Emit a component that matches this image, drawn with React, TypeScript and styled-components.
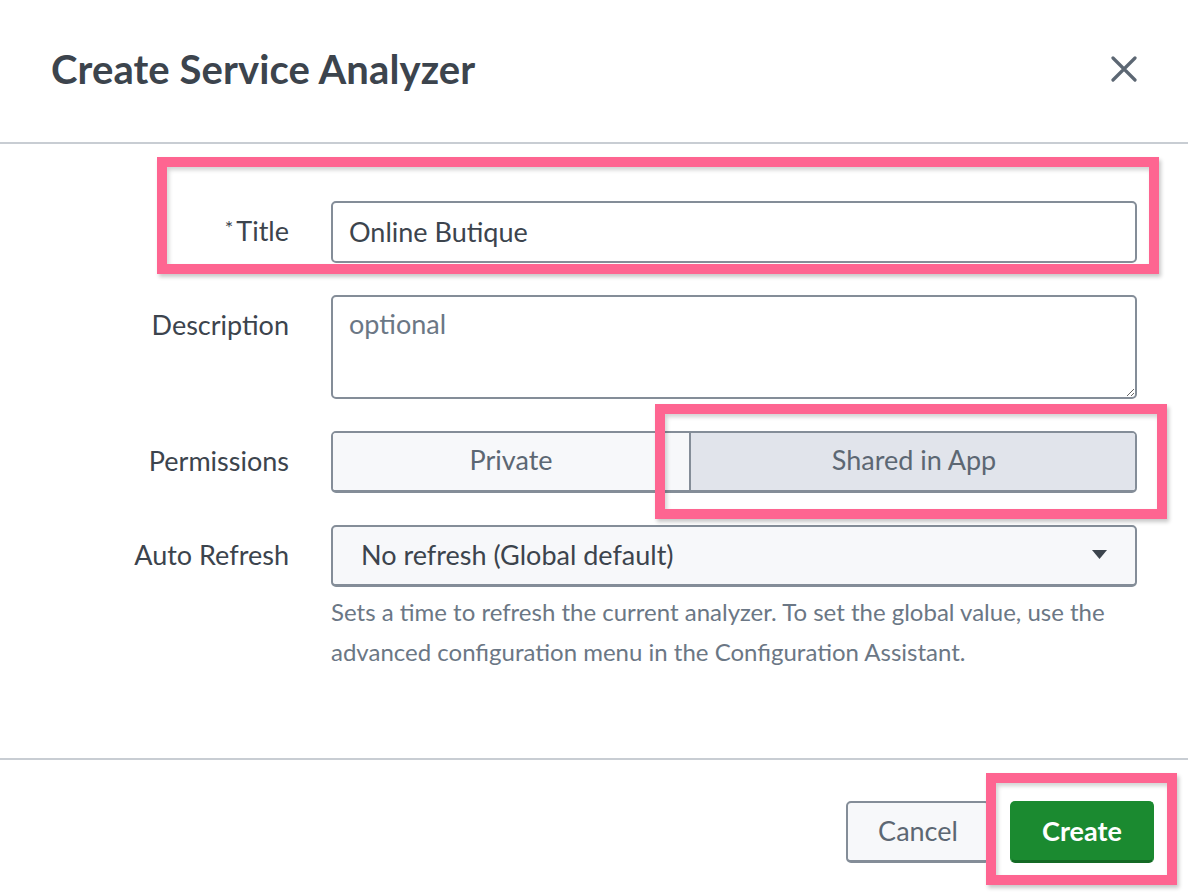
import React from "react";
import styled, { createGlobalStyle } from "styled-components";

const Global = createGlobalStyle`
  html, body { margin: 0; padding: 0; background: #fff; }
  body { font-family: Lato, "Open Sans", "Liberation Sans", sans-serif; color: #3c444d; }
  * { box-sizing: border-box; }
`;

const Dialog = styled.div`
  position: relative;
  width: 1188px;
  height: 896px;
  background: #fff;
  display: flex;
  flex-direction: column;
  overflow: hidden;
`;

const Header = styled.header`
  flex: none;
  height: 144px;
  display: flex;
  align-items: center;
  justify-content: space-between;
  padding: 0 50px 4px 51px;
  border-bottom: 2px solid #c8cdd3;
`;

const Heading = styled.h1`
  margin: 0;
  font-size: 40px;
  font-weight: 700;
  color: #3c444d;
  letter-spacing: 0.1px;
`;

const CloseButton = styled.button`
  width: 28px;
  height: 28px;
  padding: 0;
  border: 0;
  background: transparent;
  display: flex;
  align-items: center;
  justify-content: center;
`;

const Body = styled.main`
  flex: 1;
  padding: 57px 51px 0 0;
`;

const Form = styled.div`
  display: grid;
  grid-template-columns: 289px 806px;
  column-gap: 42px;
  row-gap: 32px;
  align-items: start;
`;

const Label = styled.label`
  height: 62px;
  text-align: right;
  font-size: 27px;
  line-height: 60px;
  color: #3c444d;
  white-space: nowrap;
`;

const Req = styled.span`
  display: inline-block;
  font-size: 20px;
  line-height: 0;
  position: relative;
  top: -6px;
  margin-right: 3px;
`;

const TextInput = styled.input`
  width: 100%;
  height: 62px;
  border: 2px solid #848d98;
  border-radius: 5px;
  padding: 0 16px 2px;
  font: inherit;
  font-size: 27px;
  color: #3c444d;
  background: #fff;
  outline: none;
`;

const TextArea = styled.textarea`
  display: block;
  width: 100%;
  height: 104px;
  border: 2px solid #848d98;
  border-radius: 5px;
  padding: 11px 16px;
  font: inherit;
  font-size: 27px;
  line-height: 32px;
  color: #3c444d;
  background: #fff;
  outline: none;
  resize: vertical;
  &::placeholder { color: #6b7785; }
`;

const Segmented = styled.div`
  display: flex;
  height: 62px;
  border: 2px solid #848d98;
  border-bottom-width: 3px;
  border-radius: 5px;
  overflow: hidden;
`;

const Segment = styled.button<{ $active?: boolean; $w: number }>`
  flex: none;
  width: ${(p) => p.$w}px;
  height: 100%;
  border: 0;
  border-left: ${(p) => (p.$active ? "2px solid #848d98" : "0")};
  background: ${(p) => (p.$active ? "#e1e4eb" : "#f7f8fa")};
  font: inherit;
  font-size: 27px;
  color: #5c6773;
  padding: 0;
  padding-bottom: 4px;
`;

const FieldStack = styled.div`
  display: flex;
  flex-direction: column;
  gap: 5px;
`;

const Select = styled.div`
  height: 62px;
  display: flex;
  align-items: center;
  justify-content: space-between;
  border: 2px solid #848d98;
  border-bottom-width: 3px;
  border-radius: 5px;
  background: #f7f8fa;
  padding: 0 28px 3px 28px;
  font-size: 27px;
  color: #3c444d;
`;

const Help = styled.p`
  margin: 0;
  font-size: 24px;
  line-height: 40px;
  color: #6b7785;
`;

const Footer = styled.footer`
  flex: none;
  height: 138px;
  border-top: 2px solid #c8cdd3;
  display: flex;
  justify-content: flex-end;
  align-items: flex-start;
  gap: 20px;
  padding: 41px 34px 0 0;
`;

const Button = styled.button<{ $primary?: boolean }>`
  width: 144px;
  height: 62px;
  border-radius: 5px;
  font-family: inherit;
  font-size: 27px;
  font-weight: ${(p) => (p.$primary ? 700 : 400)};
  color: ${(p) => (p.$primary ? "#fff" : "#5c6773")};
  background: ${(p) => (p.$primary ? "#1b8a30" : "#f7f8fa")};
  border: 2px solid ${(p) => (p.$primary ? "#1b8a30" : "#848d98")};
  border-bottom: 3px solid ${(p) => (p.$primary ? "#146a25" : "#848d98")};
  padding: 0 0 3px;
`;

const Highlight = styled.div<{ $x: number; $y: number; $w: number; $h: number }>`
  position: absolute;
  left: ${(p) => p.$x}px;
  top: ${(p) => p.$y}px;
  width: ${(p) => p.$w}px;
  height: ${(p) => p.$h}px;
  border: 10px solid #fe6591;
  box-shadow: 2px 3px 4px rgba(0, 0, 0, 0.22), inset 2px 3px 4px rgba(0, 0, 0, 0.18);
  pointer-events: none;
`;

export default function App() {
  return (
    <>
      <Global />
      <Dialog>
        <Header>
          <Heading>Create Service Analyzer</Heading>
          <CloseButton aria-label="Close">
            <svg width="26" height="26" viewBox="0 0 26 26">
              <path d="M2 2 L24 24 M24 2 L2 24" stroke="#5c6773" strokeWidth="3.2" strokeLinecap="round" />
            </svg>
          </CloseButton>
        </Header>
        <Body>
          <Form>
            <Label>
              <Req>*</Req>Title
            </Label>
            <TextInput defaultValue="Online Butique" />
            <Label>Description</Label>
            <TextArea placeholder="optional" />
            <Label>Permissions</Label>
            <Segmented>
              <Segment $w={356}>Private</Segment>
              <Segment $w={448} $active>
                Shared in App
              </Segment>
            </Segmented>
            <Label>Auto Refresh</Label>
            <FieldStack>
              <Select>
                <span>No refresh (Global default)</span>
                <svg width="15" height="9" viewBox="0 0 15 9">
                  <path d="M0 0 H15 L7.5 9 Z" fill="#3c444d" />
                </svg>
              </Select>
              <Help>
                Sets a time to refresh the current analyzer. To set the global value, use the advanced configuration
                menu in the Configuration Assistant.
              </Help>
            </FieldStack>
          </Form>
        </Body>
        <Footer>
          <Button>Cancel</Button>
          <Button $primary>Create</Button>
        </Footer>
        <Highlight $x={157} $y={157} $w={1002} $h={117} />
        <Highlight $x={655} $y={404} $w={512} $h={115} />
        <Highlight $x={986} $y={773} $w={191} $h={112} />
      </Dialog>
    </>
  );
}
